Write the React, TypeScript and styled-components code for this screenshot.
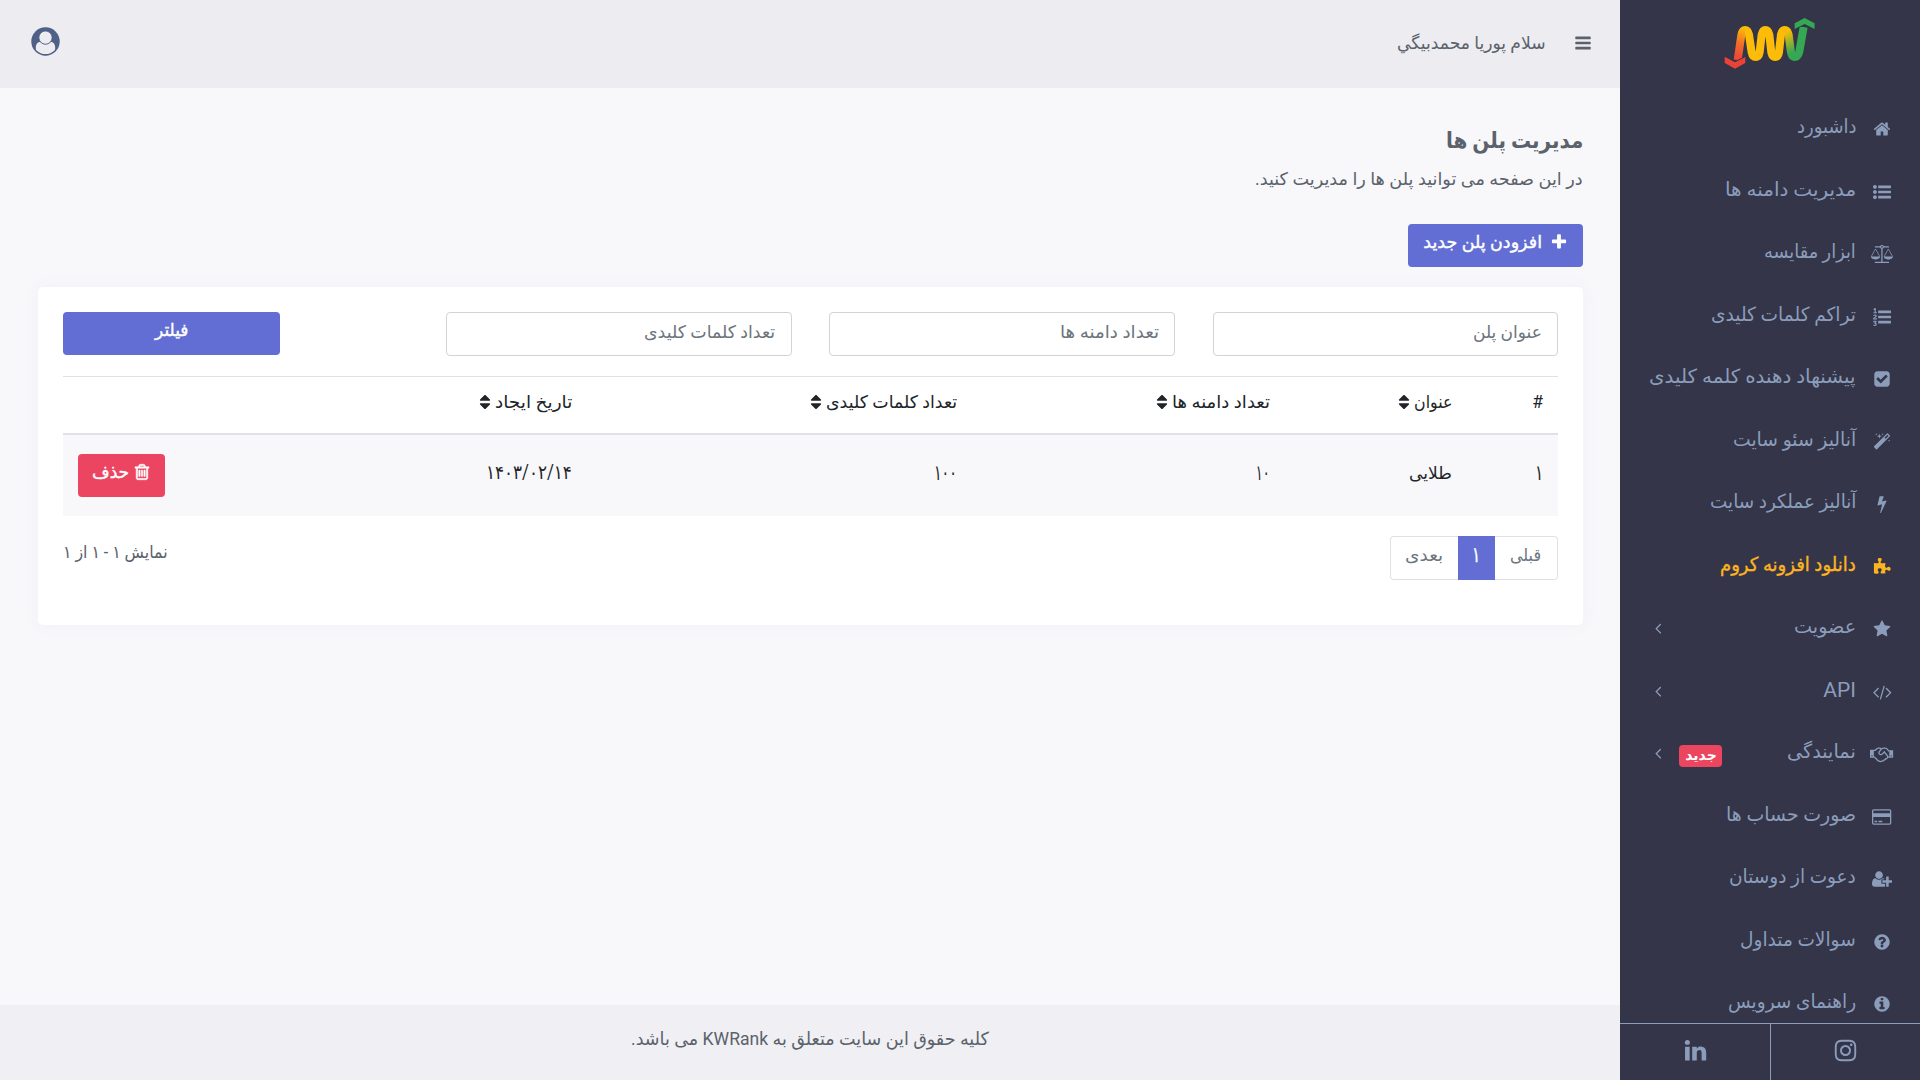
import React, { useLayoutEffect, useRef, useState } from 'react';
import styled, { createGlobalStyle } from 'styled-components';

const disc =
  'M1664 896q0 209-103 385.5t-279.5 279.5-385.5 103-385.5-103-279.5-279.5-103-385.5 103-385.5 279.5-279.5 385.5-103 385.5 103 279.5 279.5 103 385.5z';
const bar = 'v192q0 13-9.5 22.5t-22.5 9.5h-1216q-13 0-22.5-9.5t-9.5-22.5v-192q0-13 9.5-22.5t22.5-9.5h1216q13 0 22.5 9.5t9.5 22.5z';
const bullet = 'q0 80-56 136t-136 56-136-56-56-136 56-136 136-56 136 56 56 136z';
const line = 'v128q0 26-19 45t-45 19h-1408q-26 0-45-19t-19-45v-128q0-26 19-45t45-19h1408q26 0 45 19t19 45z';
const slot = 'v576q0 14-9 23t-23 9h-64q-14 0-23-9t-9-23v-576q0-14 9-23t23-9h64q14 0 23 9t9 23z';
const pan =
  'q0 73-46.5 131t-117.5 91-144.5 49.5-139.5 16.5-139.5-16.5-144.5-49.5-117.5-91-46.5-131q0-11 35-81t92-174.5 107-195.5 102-184 56-100q18-33 56-33t56 33q4 7 56 100t102 184 107 195.5 92 174.5 35 81z';

const icons: Record<string, [number, string]> = {
  home: [1792, 'M1472 992v480q0 26-19 45t-45 19h-384v-384h-256v384h-384q-26 0-45-19t-19-45v-480q0-1 .5-3t.5-3l575-474 575 474q1 2 1 6zm223-69l-62 74q-8 9-21 11h-3q-13 0-21-7l-692-577-692 577q-12 8-24 7-13-2-21-11l-62-74q-8-10-7-23.5t11-21.5l719-599q32-26 76-26t76 26l244 204v-195q0-14 9-23t23-9h192q14 0 23 9t9 23v408l219 182q10 8 11 21.5t-7 23.5z'],
  listUl: [1792, `M384 1408${bullet}M384 896${bullet}M384 384${bullet}M1792 1312${bar}M1792 800${bar}M1792 288${bar}`],
  scale: [2176, `M1728 448l-384 704h768zm-1280 0l-384 704h768zm821-192q-14 40-45.5 71.5t-71.5 45.5v1291h608q14 0 23 9t9 23v64q0 14-9 23t-23 9h-1344q-14 0-23-9t-9-23v-64q0-14 9-23t23-9h608v-1291q-40-14-71.5-45.5t-45.5-71.5h-491q-14 0-23-9t-9-23v-64q0-14 9-23t23-9h491q21-57 70-92.5t111-35.5 111 35.5 70 92.5h491q14 0 23 9t9 23v64q0 14-9 23t-23 9h-491zm-181 16q33 0 56.5-23.5t23.5-56.5-23.5-56.5-56.5-23.5-56.5 23.5-23.5 56.5 23.5 56.5 56.5 23.5zm1088 880${pan}m-1280 0${pan}`],
  listOl: [1792, `M381 1620q0 80-54.5 126t-135.5 46q-106 0-172-66l57-88q49 45 106 45 29 0 50.5-14.5t21.5-42.5q0-64-105-56l-26-56q8-10 32.5-43.5t42.5-54 37-38.5v-1q-16 0-48.5 1t-48.5 1v53h-106v-152h333v88l-95 115q51 12 81 49t30 88zm2-627v159h-362q-6-36-6-54 0-51 23.5-93t56.5-68 66-47.5 56.5-43.5 23.5-45q0-25-14.5-38.5t-39.5-13.5q-46 0-81 58l-85-59q24-51 71.5-79.5t105.5-28.5q73 0 123 41.5t50 112.5q0 50-34 91.5t-75 64.5-75.5 50.5-35.5 52.5h127v-60h105zM384 413v99h-335v-99h107q0-41 .5-121.5t.5-121.5v-12h-2q-8 17-50 54l-71-76 136-127h106v404h108zM1792 1312${bar}M1792 800${bar}M1792 288${bar}`],
  check: [1792, 'M813 1299l614-614q19-19 19-45t-19-45l-102-102q-19-19-45-19t-45 19l-467 467-211-211q-19-19-45-19t-45 19l-102 102q-19 19-19 45t19 45l358 358q19 19 45 19t45-19zm851-883v960q0 119-84.5 203.5t-203.5 84.5h-960q-119 0-203.5-84.5t-84.5-203.5v-960q0-119 84.5-203.5t203.5-84.5h960q119 0 203.5 84.5t84.5 203.5z'],
  magic: [1792, 'M1254 581l293-293-107-107-293 293zm447-293q0 27-18 45l-1286 1286q-18 18-45 18t-45-18l-198-198q-18-18-18-45t18-45l1286-1286q18-18 45-18t45 18l198 198q18 18 18 45zm-1351-190l98 30-98 30-30 98-30-98-98-30 98-30 30-98zm350 162l196 60-196 60-60 196-60-196-196-60 196-60 60-196zm930 478l98 30-98 30-30 98-30-98-98-30 98-30 30-98zm-640-640l98 30-98 30-30 98-30-98-98-30 98-30 30-98z'],
  bolt: [1792, 'M1333 566q18 20 7 44l-540 1157q-13 25-42 25-4 0-14-2-17-5-25.5-19t-4.5-30l197-808-406 101q-4 1-12 1-18 0-31-11-18-15-13-39l201-825q4-14 16-23t28-9h328q19 0 32 12.5t13 29.5q0 8-5 18l-171 463 396-98q8-2 12-2 19 0 34 15z'],
  puzzle: [1792, 'M1755 1083q0 81-44.5 135t-123.5 54q-41 0-77.5-17.5t-59-38-56.5-38-71-17.5q-110 0-110 124 0 39 16 115t15 115v5q-22 0-33 1-34 3-97.5 11.5t-115.5 13.5-98 5q-61 0-103-26.5t-42-83.5q0-37 17.5-71t38-56.5 38-59 17.5-77.5q0-79-54-123.5t-135-44.5q-84 0-143 45.5t-59 127.5q0 43 15 83t33.5 64.5 33.5 53 15 50.5q0 45-46 89-37 35-117 35-95 0-245-24-9-2-27.5-4t-27.5-4l-13-2q-1 0-3-1-2 0-2-1v-1024q2 1 17.5 3.5t34 5 21.5 3.5q150 24 245 24 80 0 117-35 46-44 46-89 0-22-15-50.5t-33.5-53-33.5-64.5-15-83q0-82 59-127.5t144-45.5q80 0 134 44.5t54 123.5q0 41-17.5 77.5t-38 59-38 56.5-17.5 71q0 57 42 83.5t103 26.5q64 0 180-15t163-17v2q-1 2-3.5 17.5t-5 34-3.5 21.5q-24 150-24 245 0 80 35 117 44 46 89 46 22 0 50.5-15t53-33.5 64.5-33.5 83-15q82 0 127.5 59t45.5 143z'],
  star: [1792, 'M1728 647q0 22-26 48l-363 354 86 500q1 7 1 20 0 21-10.5 35.5t-30.5 14.5q-19 0-40-12l-449-236-449 236q-22 12-40 12-21 0-31.5-14.5t-10.5-35.5q0-6 2-20l86-500-364-354q-25-27-25-48 0-37 56-46l502-73 225-455q19-41 49-41t49 41l225 455 502 73q56 9 56 46z'],
  code: [2048, 'M681 1399l-50 50q-10 10-23 10t-23-10l-466-466q-10-10-10-23t10-23l466-466q10-10 23-10t23 10l50 50q10 10 10 23t-10 23l-393 393 393 393q10 10 10 23t-10 23zm591-1067l-373 1291q-4 13-15.5 19.5t-23.5 2.5l-62-17q-13-4-19.5-15.5t-2.5-24.5l373-1291q4-13 15.5-19.5t23.5-2.5l62 17q13 4 19.5 15.5t2.5 24.5zm657 651l-466 466q-10 10-23 10t-23-10l-50-50q-10-10-10-23t10-23l393-393-393-393q-10-10-10-23t10-23l50-50q10-10 23-10t23 10l466 466q10 10 10 23t-10 23z'],
  handshake: [2304, 'M192 1152q40 0 56-32t0-64-56-32-56 32 0 64 56 32zm1473-58q-10-13-38.5-50t-41.5-54-38-49-42.5-53-40.5-47-45-49l-125 140q-83 94-208.5 92t-205.5-98q-57-69-56.5-158t58.5-157l177-206q-22-11-51-16.5t-47.5-6-56.5.5-49 1q-92 0-158 66l-158 158h-155v544q5 0 21-.5t22 0 19.5 2 20.5 4.5 17.5 8.5 18.5 13.5l297 292q115 111 227 111 78 0 125-47 57 20 112.5-8t72.5-85q74 6 127-44 20-18 36-45.5t14-50.5q10 10 43 10 43 0 77-21t49.5-53 12-71.5-30.5-73.5zm159 58h96v-512h-93l-157-180q-66-76-169-76h-167q-89 0-146 67l-209 243q-28 33-28 75t27 75q43 51 110 52t111-49l193-218q25-23 53.5-21.5t47 27 8.5 56.5q16 19 56 63t60 68q29 36 82.5 105.5t64.5 84.5q52 66 60 140zm288 0q40 0 56-32t0-64-56-32-56 32 0 64 56 32zm192-576v640q0 26-19 45t-45 19h-434q-27 65-82 106.5t-125 51.5q-33 48-80.5 81.5t-102.5 45.5q-42 53-104.5 81.5t-128.5 24.5q-60 34-126 39.5t-127.5-14-117-53.5-103.5-81l-287-282h-358q-26 0-45-19t-19-45v-672q0-26 19-45t45-19h421q14-14 47-48t47.5-48 44-40 50.5-37.5 51-25.5 62-19.5 68-5.5h117q99 0 181 56 82-56 181-56h167q35 0 67 6t56.5 14.5 51.5 26.5 44.5 31 43 39.5 39 42 41 48 41.5 48.5h355q26 0 45 19t19 45z'],
  card: [1920, 'M1760 128q66 0 113 47t47 113v1216q0 66-47 113t-113 47h-1600q-66 0-113-47t-47-113v-1216q0-66 47-113t113-47h1600zm-1600 128q-13 0-22.5 9.5t-9.5 22.5v224h1664v-224q0-13-9.5-22.5t-22.5-9.5h-1600zm1600 1280q13 0 22.5-9.5t9.5-22.5v-608h-1664v608q0 13 9.5 22.5t22.5 9.5h1600zm-1504-128v-128h256v128h-256zm384 0v-128h384v128h-384z'],
  userPlus: [2048, 'M704 896q-159 0-271.5-112.5t-112.5-271.5 112.5-271.5 271.5-112.5 271.5 112.5 112.5 271.5-112.5 271.5-271.5 112.5zm960 128h352q13 0 22.5 9.5t9.5 22.5v192q0 13-9.5 22.5t-22.5 9.5h-352v352q0 13-9.5 22.5t-22.5 9.5h-192q-13 0-22.5-9.5t-9.5-22.5v-352h-352q-13 0-22.5-9.5t-9.5-22.5v-192q0-13 9.5-22.5t22.5-9.5h352v-352q0-13 9.5-22.5t22.5-9.5h192q13 0 22.5 9.5t9.5 22.5v352zm-736 224q0 52 38 90t90 38h256v238q-68 50-171 50h-874q-121 0-194-69t-73-190q0-53 3.5-103.5t14-109 26.5-108.5 43-97.5 62-81 85.5-53.5 111.5-20q19 0 39 17 79 61 154.5 91.5t164.5 30.5 164.5-30.5 154.5-91.5q20-17 39-17 132 0 217 96h-223q-52 0-90 38t-38 90v192z'],
  question: [1792, `M1024 1376v-192q0-14-9-23t-23-9h-192q-14 0-23 9t-9 23v192q0 14 9 23t23 9h192q14 0 23-9t9-23zm256-672q0-88-55.5-163t-138.5-116-170-41q-243 0-371 213-15 24 8 42l132 100q7 6 19 6 16 0 25-12 53-68 86-92 34-24 86-24 48 0 85.5 26t37.5 59q0 38-20 61t-68 45q-63 28-115.5 86.5t-52.5 125.5v36q0 14 9 23t23 9h192q14 0 23-9t9-23q0-19 21.5-49.5t54.5-49.5q32-18 49-28.5t46-35 44.5-48 28-60.5 12.5-81z${disc}`],
  info: [1792, `M1152 1376v-160q0-14-9-23t-23-9h-96v-512q0-14-9-23t-23-9h-320q-14 0-23 9t-9 23v160q0 14 9 23t23 9h96v320h-96q-14 0-23 9t-9 23v160q0 14 9 23t23 9h448q14 0 23-9t9-23zm-128-896v-160q0-14-9-23t-23-9h-192q-14 0-23 9t-9 23v160q0 14 9 23t23 9h192q14 0 23-9t9-23z${disc}`],
  angle: [627, 'M617 544q0 13-10 23l-393 393 393 393q10 10 10 23t-10 23l-50 50q-10 10-23 10t-23-10l-466-466q-10-10-10-23t10-23l466-466q10-10 23-10t23 10l50 50q10 10 10 23z'],
  plus: [1792, 'M1600 736v192q0 40-28 68t-68 28h-416v416q0 40-28 68t-68 28h-192q-40 0-68-28t-28-68v-416h-416q-40 0-68-28t-28-68v-192q0-40 28-68t68-28h416v-416q0-40 28-68t68-28h192q40 0 68 28t28 68v416h416q40 0 68 28t28 68z'],
  bars: [1792, `M1664 1344${line}M1664 832${line}M1664 320${line}`],
  sort: [1792, 'M1408 1088q0 26-19 45l-448 448q-19 19-45 19t-45-19l-448-448q-19-19-19-45t19-45 45-19h896q26 0 45 19t19 45zm0-384q0 26-19 45t-45 19h-896q-26 0-45-19t-19-45 19-45l448-448q19-19 45-19t45 19l448 448q19 19 19 45z'],
  linkedin: [1792, 'M477 625v991h-330v-991h330zm21-306q1 73-50.5 122t-135.5 49h-2q-82 0-132-49t-50-122q0-74 51.5-122.5t134.5-48.5 133 48.5 51 122.5zm1166 729v568h-329v-530q0-105-40.5-164.5t-126.5-59.5q-63 0-105.5 34.5t-63.5 85.5q-11 30-11 81v553h-329q2-399 2-647t-1-296l-1-48h329v144h-2q20-32 41-56t56.5-52 87-43.5 114.5-15.5q171 0 275 113.5t104 332.5z'],
  instagram: [1792, 'M1152 896q0-106-75-181t-181-75-181 75-75 181 75 181 181 75 181-75 75-181zm138 0q0 164-115 279t-279 115-279-115-115-279 115-279 279-115 279 115 115 279zm108-410q0 38-27 65t-65 27-65-27-27-65 27-65 65-27 65 27 27 65zm-502-220q-7 0-76.5-.5t-105.5 0-96.5 3-103 10-71.5 18.5q-50 20-88 58t-58 88q-11 29-18.5 71.5t-10 103-3 96.5 0 105.5.5 76.5-.5 76.5 0 105.5 3 96.5 10 103 18.5 71.5q20 50 58 88t88 58q29 11 71.5 18.5t103 10 96.5 3 105.5 0 76.5-.5 76.5.5 105.5 0 96.5-3 103-10 71.5-18.5q50-20 88-58t58-88q11-29 18.5-71.5t10-103 3-96.5 0-105.5-.5-76.5.5-76.5 0-105.5-3-96.5-10-103-18.5-71.5q-20-50-58-88t-88-58q-29-11-71.5-18.5t-103-10-96.5-3-105.5 0-76.5.5zm768 630q0 229-5 317-10 208-124 322t-322 124q-88 5-317 5t-317-5q-208-10-322-124t-124-322q-5-88-5-317t5-317q10-208 124-322t322-124q88-5 317-5t317 5q208 10 322 124t124 322q5 88 5 317z'],
  trash: [1792, `M704 736${slot}M960 736${slot}M1216 736${slot}M1344 1460v-948h-896v948q0 22 7 40.5t14.5 27 10.5 8.5h832q3 0 10.5-8.5t14.5-27 7-40.5zm-672-1076h448l-48-117q-7-9-17-11h-317q-10 2-17 11zm928 32v64q0 14-9 23t-23 9h-96v948q0 83-47 143.5t-113 60.5h-832q-66 0-113-58.5t-47-141.5v-952h-96q-14 0-23-9t-9-23v-64q0-14 9-23t23-9h309l70-167q15-37 54-63t79-26h320q40 0 79 26t54 63l70 167h309q14 0 23 9t9 23z`],
};

const Global = createGlobalStyle`
  * { box-sizing: border-box; }
  body {
    margin: 0;
    background: #f8f8fb;
    color: #212529;
    font-family: Roboto, "DejaVu Sans", sans-serif;
    font-size: 16px;
  }
`;

const Svg = styled.svg`
  display: block;
  flex: none;
  fill: currentColor;
`;

function Icon({ name, size = 18, heavy }: { name: string; size?: number; heavy?: boolean }) {
  const [w, d] = icons[name];
  return (
    <Svg
      width={(size * w) / 1792}
      height={size}
      viewBox={`0 0 ${w} 1792`}
      fillRule={name === 'info' || name === 'question' ? 'evenodd' : 'nonzero'}
      stroke={heavy ? 'currentColor' : 'none'}
      strokeWidth={heavy ? 60 : 0}
    >
      <path d={d} />
    </Svg>
  );
}

const FitBox = styled.span<{ $w: number; $size: number; $bold?: boolean; $medium?: boolean; $lift: number }>`
  display: flex;
  flex: none;
  width: ${p => p.$w}px;
  height: 26px;
  line-height: 26px;
  font-size: ${p => p.$size}px;
  font-weight: ${p => (p.$bold ? 700 : 400)};
  -webkit-text-stroke: ${p => (p.$medium ? '0.4px currentColor' : '0')};
  margin-bottom: ${p => p.$lift}px;
  white-space: nowrap;
`;

const FitText = styled.span`
  flex: none;
  transform-origin: right center;
`;

interface FitProps { w: number; size?: number; bold?: boolean; medium?: boolean; lift?: number; children: string }

/* Condenses a Persian label so that it takes exactly the column width reserved for it. */
function Fit({ w, size = 17.5, bold, medium, lift = 0, children }: FitProps) {
  const ref = useRef<HTMLSpanElement>(null);
  const [k, setK] = useState(1);
  useLayoutEffect(() => {
    if (ref.current) setK(w / ref.current.offsetWidth);
  }, [w, children]);
  return (
    <FitBox $w={w} $size={size} $bold={bold} $medium={medium} $lift={lift}>
      <FitText ref={ref} style={{ transform: `scaleX(${k})` }}>{children}</FitText>
    </FitBox>
  );
}

const Page = styled.div`
  display: flex;
  direction: rtl;
  width: 100%;
  height: 1080px;
  overflow: hidden;
`;

const Sidebar = styled.aside`
  display: flex;
  flex-direction: column;
  flex: none;
  width: 300px;
  height: 1080px;
  background: #343548;
  color: #8b9dbb;
`;

const Brand = styled.div`
  display: flex;
  flex: none;
  justify-content: center;
  height: 98px;
  padding-top: 17px;
`;

const Menu = styled.nav`
  flex: 1;
  min-height: 0;
  overflow: hidden;
`;

const MenuItem = styled.a<{ $accent?: boolean }>`
  display: flex;
  align-items: center;
  height: 62.5px;
  padding: 0 22px 0 35px;
  color: ${p => (p.$accent ? '#fcb322' : 'inherit')};
`;

const MenuIcon = styled.span`
  display: flex;
  justify-content: center;
  flex: none;
  width: 32px;
  margin-left: 10px;
`;

const MenuEnd = styled.span`
  display: flex;
  align-items: center;
  gap: 33px;
  margin-right: auto;
  padding-bottom: 2px;
`;

const Badge = styled.span`
  display: flex;
  align-items: center;
  justify-content: center;
  width: 43px;
  height: 22px;
  border-radius: 4px;
  background: #eb4560;
  color: #fff;
  margin: 6px 0 0 -11px;
  transform: translateX(-4px);
`;

const Socials = styled.div`
  display: grid;
  grid-template-columns: 150px 150px;
  flex: none;
  height: 57px;
  border-top: 1px solid #8b9dbb;
`;

const Social = styled.a`
  display: flex;
  align-items: center;
  justify-content: center;
  padding-bottom: 3px;

  &:first-child { border-left: 1px solid #8b9dbb; }
`;

const Main = styled.div`
  display: flex;
  flex: 1;
  flex-direction: column;
  min-width: 0;
`;

const TopBar = styled.header`
  display: flex;
  align-items: center;
  flex: none;
  height: 88px;
  padding: 0 28px 2px 31px;
  background: #ececf1;
  color: #5b626b;
`;

const Greeting = styled.div`
  display: flex;
  margin-right: 28px;
`;

const Profile = styled.div`
  display: flex;
  margin: 0 auto 4px 0;
`;

const Content = styled.main`
  flex: 1;
  padding: 40px 37px 0 38px;
  color: #5b626b;
`;

const Title = styled.h4`
  display: flex;
  height: 36px;
  margin: 0;
`;

const Subtitle = styled.p`
  display: flex;
  height: 60px;
  margin: 0;
  padding-top: 2px;
`;

const Button = styled.button<{ $w: number; $tone?: string }>`
  display: flex;
  align-items: center;
  justify-content: center;
  gap: ${p => (p.$tone ? 3 : 8)}px;
  width: ${p => p.$w}px;
  height: 43px;
  padding: 0 0 7px;
  border: 0;
  border-radius: 4px;
  background: ${p => p.$tone || '#626ed4'};
  color: #fff;
  font-family: inherit;
`;

const Card = styled.section`
  height: 338px;
  margin-top: 20px;
  padding: 25px;
  border-radius: 5px;
  background: #fff;
  box-shadow: 0 0 13px rgba(236, 236, 241, 0.6);
`;

const Filters = styled.div`
  display: flex;
  gap: 37.8px;
  height: 64px;
`;

const Field = styled.div`
  display: flex;
  align-items: center;
  flex: none;
  width: 345.4px;
  height: 44px;
  padding: 0 15px 5px;
  border: 1px solid #ced4da;
  border-radius: 4px;
  color: #6c757d;
`;

const FilterAction = styled.div`
  margin-right: auto;
`;

const Table = styled.div`
  color: #212529;
`;

const Row = styled.div<{ $head?: boolean }>`
  display: grid;
  grid-template-columns: 91px 182px 313px 385px 407px 117px;
  align-items: center;
  height: ${p => (p.$head ? 59 : 81)}px;
  padding-bottom: ${p => (p.$head ? 6 : 0)}px;
  background: ${p => (p.$head ? '#fff' : '#f8f8fa')};
  border-top: ${p => (p.$head ? '1px solid #dee2e6' : '0')};
  border-bottom: ${p => (p.$head ? '2px solid #dee2e6' : '0')};
`;

const Cell = styled.div`
  display: flex;
  align-items: center;
  gap: 1px;
  padding: 0 15px;
`;

const CardFoot = styled.div`
  display: flex;
  justify-content: space-between;
  align-items: flex-start;
  padding-top: 20px;
`;

const Pager = styled.div`
  display: flex;
  height: 44px;
`;

const PageLink = styled.a<{ $w: number; $pos: 'first' | 'active' | 'last' }>`
  display: flex;
  align-items: center;
  justify-content: center;
  width: ${p => p.$w}px;
  padding-bottom: 6px;
  border: 1px solid ${p => (p.$pos === 'active' ? '#626ed4' : '#dee2e6')};
  border-left-width: ${p => (p.$pos === 'first' ? 0 : 1)}px;
  border-right-width: ${p => (p.$pos === 'last' ? 0 : 1)}px;
  border-radius: ${p => ({ first: '0 4px 4px 0', active: '0', last: '4px 0 0 4px' }[p.$pos])};
  background: ${p => (p.$pos === 'active' ? '#626ed4' : '#fff')};
  color: ${p => (p.$pos === 'active' ? '#fff' : '#6c757d')};
`;

const Showing = styled.div`
  padding-top: 3px;
  color: #5b626b;
`;

const Footer = styled.footer`
  display: flex;
  justify-content: center;
  flex: none;
  height: 75px;
  padding-top: 21px;
  background: #f0f0f4;
  color: #5b626b;
`;

function Logo() {
  return (
    <Svg width="93.3" height="53.3" viewBox="310 50 280 160">
      <defs>
        <linearGradient id="wave-start" gradientUnits="userSpaceOnUse" x1="350" y1="165" x2="378" y2="85">
          <stop offset="0" stopColor="#ee4b35" />
          <stop offset="0.45" stopColor="#f36f28" />
          <stop offset="1" stopColor="#fbbc05" />
        </linearGradient>
        <linearGradient id="wave-end" gradientUnits="userSpaceOnUse" x1="500" y1="95" x2="524" y2="155">
          <stop offset="0" stopColor="#fbbc05" />
          <stop offset="1" stopColor="#34a853" />
        </linearGradient>
      </defs>
      <g fill="none" strokeWidth="24">
        <path d="M525 170Q535 170 539 155L552 80" stroke="#34a853" />
        <path d="M495 89Q504 89 507 103L514 156Q517 170 526 170" stroke="url(#wave-end)" />
        <path d="M354 179L365 104Q368 89 377 89" stroke="url(#wave-start)" />
        <path d="M376 89Q385 89 388 103L396 156Q399 170 408 170Q417 170 420 156L426 103Q429 89 437 89Q446 89 449 103L455 156Q458 170 467 170Q475 170 478 156L484 103Q487 89 496 89" stroke="#fdbc08" />
      </g>
      <g stroke="#343548" strokeWidth="5" paintOrder="stroke">
        <path d="M525 69L555 53L585 69V86L555 71L525 86Z" fill="#34a853" />
        <path d="M315 169L346 186L377 170V188L346 205L315 188Z" fill="#ea4335" />
      </g>
    </Svg>
  );
}

function ProfileIcon() {
  return (
    <Svg width="29" height="29" viewBox="0 0 29 29">
      <defs>
        <clipPath id="face"><circle cx="14.5" cy="14.5" r="12.6" /></clipPath>
      </defs>
      <circle cx="14.5" cy="14.5" r="14.2" fill="#4f6186" />
      <g clipPath="url(#face)">
        <path d="M4.8 27V20.5C5 16.5 7 15 9 15Q14.500 20 20 15C22 15 24 16.500 24.200 20.500V27Z" fill="#ececf1" />
      </g>
      <circle cx="14.5" cy="10.6" r="6.6" fill="#ececf1" stroke="#4f6186" strokeWidth="0.8" />
    </Svg>
  );
}

interface Entry { icon: string; label: string; w: number; accent?: boolean; more?: boolean; isNew?: boolean }

const entries: Entry[] = [
  { icon: 'home', label: 'داشبورد', w: 60 },
  { icon: 'listUl', label: 'مدیریت دامنه ها', w: 131 },
  { icon: 'scale', label: 'ابزار مقایسه', w: 92 },
  { icon: 'listOl', label: 'تراکم کلمات کلیدی', w: 145 },
  { icon: 'check', label: 'پیشنهاد دهنده کلمه کلیدی', w: 207 },
  { icon: 'magic', label: 'آنالیز سئو سایت', w: 123 },
  { icon: 'bolt', label: 'آنالیز عملکرد سایت', w: 146 },
  { icon: 'puzzle', label: 'دانلود افزونه کروم', w: 136, accent: true },
  { icon: 'star', label: 'عضویت', w: 62, more: true },
  { icon: 'code', label: 'API', w: 33, more: true },
  { icon: 'handshake', label: 'نمایندگی', w: 69, more: true, isNew: true },
  { icon: 'card', label: 'صورت حساب ها', w: 130 },
  { icon: 'userPlus', label: 'دعوت از دوستان', w: 127 },
  { icon: 'question', label: 'سوالات متداول', w: 116 },
  { icon: 'info', label: 'راهنمای سرویس', w: 128 },
];

const columns: [string, number, boolean][] = [
  ['#', 11, false],
  ['عنوان', 38, true],
  ['تعداد دامنه ها', 98, true],
  ['تعداد کلمات کلیدی', 131, true],
  ['تاریخ ایجاد', 77, true],
];

const values: [string, number, number][] = [['۱', 8, 21], ['طلایی', 43, 17.5], ['۱۰', 14, 21], ['۱۰۰', 23, 21], ['۱۴۰۳/۰۲/۱۴', 86, 19.5]];

const filters: [string, number][] = [['عنوان پلن', 69], ['تعداد دامنه ها', 99], ['تعداد کلمات کلیدی', 131]];

export default function App() {
  return (
    <>
      <Global />
      <Page>
        <Sidebar>
          <Brand><Logo /></Brand>
          <Menu>
            {entries.map(e => (
              <MenuItem key={e.icon} $accent={e.accent}>
                <MenuIcon><Icon name={e.icon} /></MenuIcon>
                <Fit w={e.w} size={e.label === 'API' ? 21 : 19.5} lift={4} medium={e.accent}>{e.label}</Fit>
                {e.more && (
                  <MenuEnd>
                    {e.isNew && <Badge><Fit w={32} size={14} bold lift={3}>جدید</Fit></Badge>}
                    <Icon name="angle" />
                  </MenuEnd>
                )}
              </MenuItem>
            ))}
          </Menu>
          <Socials>
            <Social><Icon name="instagram" size={25} /></Social>
            <Social><Icon name="linkedin" size={25} /></Social>
          </Socials>
        </Sidebar>
        <Main>
          <TopBar>
            <Icon name="bars" />
            <Greeting><Fit w={149}>سلام پوريا محمدبيگي</Fit></Greeting>
            <Profile><ProfileIcon /></Profile>
          </TopBar>
          <Content>
            <Title><Fit w={137} size={22} bold>مدیریت پلن ها</Fit></Title>
            <Subtitle><Fit w={328}>در این صفحه می توانید پلن ها را مدیریت کنید.</Fit></Subtitle>
            <Button $w={175}>
              <Icon name="plus" />
              <Fit w={119} medium>افزودن پلن جدید</Fit>
            </Button>
            <Card>
              <Filters>
                {filters.map(([label, w]) => <Field key={label}><Fit w={w}>{label}</Fit></Field>)}
                <FilterAction>
                  <Button $w={217}><Fit w={33} medium>فیلتر</Fit></Button>
                </FilterAction>
              </Filters>
              <Table>
                <Row $head>
                  {columns.map(([label, w, sortable]) => (
                    <Cell key={label}>
                      <Fit w={w}>{label}</Fit>
                      {sortable && <Icon name="sort" />}
                    </Cell>
                  ))}
                </Row>
                <Row>
                  {values.map(([value, w, size]) => <Cell key={value}><Fit w={w} size={size} lift={6}>{value}</Fit></Cell>)}
                  <Cell>
                    <Button $w={87} $tone="#ec4561">
                      <Icon name="trash" heavy />
                      <Fit w={37} medium>حذف</Fit>
                    </Button>
                  </Cell>
                </Row>
              </Table>
              <CardFoot>
                <Pager>
                  <PageLink $w={63} $pos="first"><Fit w={31}>قبلی</Fit></PageLink>
                  <PageLink $w={37} $pos="active"><Fit w={8} size={21} medium>۱</Fit></PageLink>
                  <PageLink $w={68} $pos="last"><Fit w={38}>بعدی</Fit></PageLink>
                </Pager>
                <Showing><Fit w={105}>نمایش ۱ - ۱ از ۱</Fit></Showing>
              </CardFoot>
            </Card>
          </Content>
          <Footer><Fit w={358} size={18}>کلیه حقوق این سایت متعلق به KWRank می باشد.</Fit></Footer>
        </Main>
      </Page>
    </>
  );
}
